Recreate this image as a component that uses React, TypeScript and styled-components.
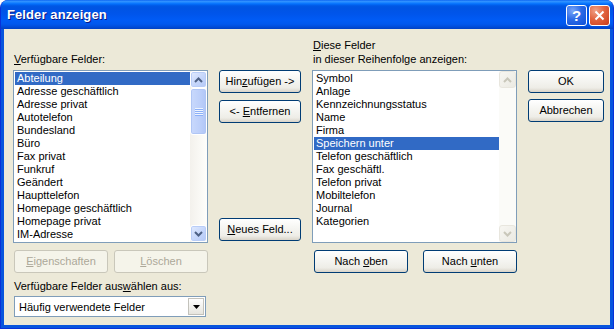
import * as React from 'react';
import styled, { createGlobalStyle } from 'styled-components';

const GlobalStyle = createGlobalStyle`
  html, body {
    margin: 0;
    padding: 0;
    background: #ffffff;
  }
  body {
    font-family: "Liberation Sans", Arial, sans-serif;
    font-size: 11px;
    color: #000;
  }
`;

const Window = styled.div`
  width: 614px;
  height: 329px;
  box-sizing: border-box;
  display: flex;
  flex-direction: column;
  background: #0855dd;
  border: 1px solid #0831d9;
  border-top: 0;
  border-radius: 8px 8px 0 0;
  overflow: hidden;
`;

const TitleBar = styled.div`
  height: 29px;
  flex: none;
  display: flex;
  align-items: center;
  padding: 0 4px 0 7px;
  margin: 0 -1px;
  background: linear-gradient(
    180deg,
    #0058ee 0px,
    #3593ff 1px,
    #288eff 2px,
    #127dff 3px,
    #036ffc 4px,
    #0262ee 5px,
    #0057e5 6px,
    #0054e3 8px,
    #0055eb 14px,
    #005bf5 20px,
    #0058ee 24px,
    #0050e0 26px,
    #0041c4 29px
  );
`;

const Title = styled.div`
  color: #fff;
  font-weight: bold;
  font-size: 13px;
  text-shadow: 1px 1px 0 #0a1883;
  letter-spacing: 0.1px;
`;

const CaptionButtons = styled.div`
  margin-left: auto;
  display: flex;
  gap: 2px;
  margin-top: 2px;
`;

const CaptionButton = styled.div<{ $close?: boolean }>`
  width: 21px;
  height: 21px;
  box-sizing: border-box;
  border: 1px solid #fff;
  border-radius: 3px;
  display: flex;
  align-items: center;
  justify-content: center;
  color: #fff;
  font-weight: bold;
  font-size: 15px;
  background: ${(p) =>
    p.$close
      ? 'radial-gradient(circle at 30% 25%, #f0a288 0%, #e2643f 45%, #c83c1c 100%)'
      : 'radial-gradient(circle at 30% 25%, #7aa6f8 0%, #2c6ae6 45%, #0d4fd8 100%)'};
`;

const Body = styled.div`
  flex: 1;
  margin: 0 3px 3px;
  background: #ece9d8;
  padding: 9px 0 0 9px;
  display: grid;
  grid-template-columns: 195px 82px 205px 76px;
  grid-template-rows: 32px 173px 30px auto;
  column-gap: 11px;
`;

const Label = styled.div<{ $col: number }>`
  grid-column: ${(p) => p.$col};
  grid-row: 1;
  align-self: end;
  margin: 0 0 4px 1px;
  line-height: 14px;
  white-space: nowrap;
`;

const Key = styled.span`
  text-decoration: underline;
  text-underline-offset: 1px;
`;

const ListBox = styled.div<{ $col: number }>`
  grid-column: ${(p) => p.$col};
  grid-row: 2;
  display: flex;
  box-sizing: border-box;
  border: 1px solid #7f9db9;
  background: #fff;
  overflow: hidden;
`;

const ListItems = styled.div`
  flex: 1;
  padding: 1px 0 1px 1px;
  overflow: hidden;
`;

const ListItem = styled.div<{ $selected?: boolean }>`
  height: 13px;
  line-height: 13px;
  padding-left: 2px;
  white-space: nowrap;
  background: ${(p) => (p.$selected ? '#316ac5' : 'transparent')};
  color: ${(p) => (p.$selected ? '#fff' : '#000')};
`;

const ScrollBar = styled.div<{ $disabled?: boolean }>`
  width: 17px;
  flex: none;
  display: flex;
  flex-direction: column;
  background: ${(p) =>
    p.$disabled ? '#fbfbf8' : 'linear-gradient(90deg, #f3f1ec, #fefefb)'};
`;

const ScrollButton = styled.div<{ $disabled?: boolean }>`
  width: 17px;
  height: 17px;
  box-sizing: border-box;
  border: 1px solid ${(p) => (p.$disabled ? '#e8e6de' : '#ffffff')};
  border-radius: 3px;
  background: ${(p) =>
    p.$disabled
      ? 'linear-gradient(135deg, #f7f6f2, #ebeae3)'
      : 'linear-gradient(135deg, #e2ebfe 0%, #c5d6fb 55%, #b3c8f6 100%)'};
  display: flex;
  align-items: center;
  justify-content: center;
  box-shadow: ${(p) => (p.$disabled ? 'none' : 'inset 0 0 0 1px #b9cdf7')};
`;

const Thumb = styled.div`
  height: 47px;
  box-sizing: border-box;
  border: 1px solid #ffffff;
  border-radius: 3px;
  background: linear-gradient(90deg, #c9d9fc 0%, #bccffa 60%, #b1c6f6 100%);
  box-shadow: inset 0 0 0 1px #b0c6f5;
  display: flex;
  align-items: center;
  justify-content: center;
`;

const TrackFill = styled.div`
  flex: 1;
`;

const ButtonColumn = styled.div<{ $col: number; $gap: number }>`
  grid-column: ${(p) => p.$col};
  grid-row: 2;
  display: flex;
  flex-direction: column;
  gap: ${(p) => p.$gap}px;
`;

const Button = styled.div<{ $disabled?: boolean; $width?: number; $push?: boolean }>`
  height: 23px;
  width: ${(p) => (p.$width ? `${p.$width}px` : 'auto')};
  box-sizing: border-box;
  border: 1px solid ${(p) => (p.$disabled ? '#c9c7ba' : '#003c74')};
  border-radius: 3px;
  background: ${(p) =>
    p.$disabled
      ? '#f5f4ea'
      : 'linear-gradient(180deg, #ffffff 0%, #f7f7f4 35%, #eeede7 80%, #d8d3c8 100%)'};
  color: ${(p) => (p.$disabled ? '#aca899' : '#000')};
  line-height: 21px;
  text-align: center;
  white-space: nowrap;
  margin-top: ${(p) => (p.$push ? 'auto' : '0')};
  margin-bottom: ${(p) => (p.$push ? '2px' : '0')};
`;

const ButtonRow = styled.div<{ $col: number; $pad: number }>`
  grid-column: ${(p) => p.$col};
  grid-row: 3;
  align-self: end;
  display: flex;
  justify-content: space-between;
  padding-left: ${(p) => p.$pad}px;
`;

const ChooserArea = styled.div`
  grid-column: 1;
  grid-row: 4;
  display: flex;
  flex-direction: column;
`;

const ChooserLabel = styled.div`
  margin: 6px 0 0 1px;
  line-height: 14px;
`;

const Combo = styled.div`
  margin: 3px 0 0 1px;
  width: 192px;
  height: 21px;
  box-sizing: border-box;
  border: 1px solid #7f9db9;
  background: #fff;
  display: flex;
  align-items: center;
  padding: 1px;
`;

const ComboText = styled.div`
  flex: 1;
  padding-left: 3px;
`;

const ComboArrow = styled.div`
  width: 16px;
  height: 17px;
  box-sizing: border-box;
  border: 1px solid #c3c2bb;
  background: linear-gradient(180deg, #ffffff, #e6e5de);
  display: flex;
  align-items: center;
  justify-content: center;
`;

const Chevron = ({ up, color }: { up?: boolean; color: string }) => (
  <svg width="9" height="6" viewBox="0 0 9 6">
    <polyline
      points={up ? '1,5 4.5,1.5 8,5' : '1,1 4.5,4.5 8,1'}
      fill="none"
      stroke={color}
      strokeWidth="2"
    />
  </svg>
);

const Grip = () => (
  <svg width="8" height="8" viewBox="0 0 8 8">
    {[0, 2, 4, 6].map((y) => (
      <g key={y}>
        <rect x="0" y={y} width="8" height="1" fill="#eef4fe" />
        <rect x="0" y={y + 1} width="8" height="1" fill="#8cb0f8" />
      </g>
    ))}
  </svg>
);

const available = [
  'Abteilung',
  'Adresse geschäftlich',
  'Adresse privat',
  'Autotelefon',
  'Bundesland',
  'Büro',
  'Fax privat',
  'Funkruf',
  'Geändert',
  'Haupttelefon',
  'Homepage geschäftlich',
  'Homepage privat',
  'IM-Adresse',
];

const shown = [
  'Symbol',
  'Anlage',
  'Kennzeichnungsstatus',
  'Name',
  'Firma',
  'Speichern unter',
  'Telefon geschäftlich',
  'Fax geschäftl.',
  'Telefon privat',
  'Mobiltelefon',
  'Journal',
  'Kategorien',
];

const App: React.FC = () => (
  <>
    <GlobalStyle />
    <Window>
      <TitleBar>
        <Title>Felder anzeigen</Title>
        <CaptionButtons>
          <CaptionButton>?</CaptionButton>
          <CaptionButton $close>
            <svg width="11" height="11" viewBox="0 0 11 11">
              <path d="M1.5 1.5 L9.5 9.5 M9.5 1.5 L1.5 9.5" stroke="#fff" strokeWidth="2" />
            </svg>
          </CaptionButton>
        </CaptionButtons>
      </TitleBar>

      <Body>
        <Label $col={1}>
          <Key>V</Key>erfügbare Felder:
        </Label>
        <Label $col={3}>
          <Key>D</Key>iese Felder
          <br />
          in dieser Reihenfolge anzeigen:
        </Label>

        <ListBox $col={1}>
          <ListItems>
            {available.map((item, i) => (
              <ListItem key={item} $selected={i === 0}>
                {item}
              </ListItem>
            ))}
          </ListItems>
          <ScrollBar>
            <ScrollButton>
              <Chevron up color="#4d6185" />
            </ScrollButton>
            <Thumb>
              <Grip />
            </Thumb>
            <TrackFill />
            <ScrollButton>
              <Chevron color="#4d6185" />
            </ScrollButton>
          </ScrollBar>
        </ListBox>

        <ButtonColumn $col={2} $gap={7}>
          <Button>
            Hin<Key>z</Key>ufügen -&gt;
          </Button>
          <Button>
            &lt;- <Key>E</Key>ntfernen
          </Button>
          <Button $push>
            <Key>N</Key>eues Feld...
          </Button>
        </ButtonColumn>

        <ListBox $col={3}>
          <ListItems>
            {shown.map((item, i) => (
              <ListItem key={item} $selected={i === 5}>
                {item}
              </ListItem>
            ))}
          </ListItems>
          <ScrollBar $disabled>
            <ScrollButton $disabled>
              <Chevron up color="#c9c7ba" />
            </ScrollButton>
            <TrackFill />
            <ScrollButton $disabled>
              <Chevron color="#c9c7ba" />
            </ScrollButton>
          </ScrollBar>
        </ListBox>

        <ButtonColumn $col={4} $gap={6}>
          <Button>OK</Button>
          <Button>Abbrechen</Button>
        </ButtonColumn>

        <ButtonRow $col={1} $pad={1}>
          <Button $disabled $width={94}>
            <Key>E</Key>igenschaften
          </Button>
          <Button $disabled $width={94}>
            <Key>L</Key>öschen
          </Button>
        </ButtonRow>

        <ButtonRow $col={3} $pad={2}>
          <Button $width={94}>
            Nach <Key>o</Key>ben
          </Button>
          <Button $width={94}>
            Nach <Key>u</Key>nten
          </Button>
        </ButtonRow>

        <ChooserArea>
          <ChooserLabel>
            Verfügbare Felder aus<Key>w</Key>ählen aus:
          </ChooserLabel>
          <Combo>
            <ComboText>Häufig verwendete Felder</ComboText>
            <ComboArrow>
              <svg width="7" height="4" viewBox="0 0 7 4">
                <polygon points="0,0 7,0 3.5,4" fill="#000" />
              </svg>
            </ComboArrow>
          </Combo>
        </ChooserArea>
      </Body>
    </Window>
  </>
);

export default App;
